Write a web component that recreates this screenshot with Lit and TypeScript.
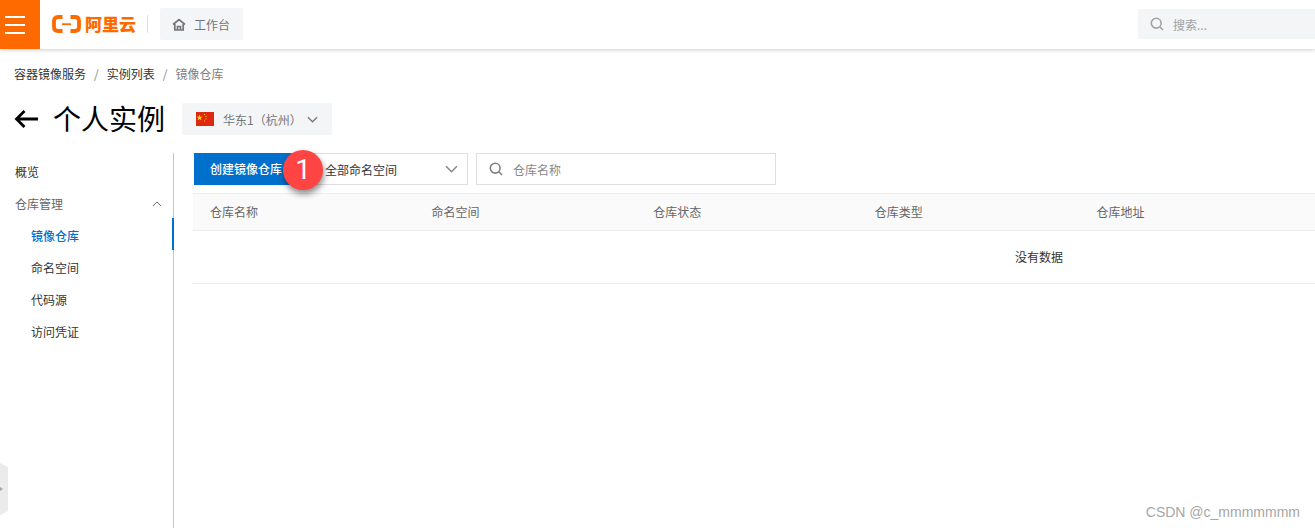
import { LitElement, html, css, svg } from "lit";
import { customElement } from "lit/decorators.js";

const search = (c: string) => svg`<svg width="14" height="14" viewBox="0 0 14 14" fill="none" stroke=${c} stroke-width="1.6"><circle cx="6.2" cy="6.2" r="4.9"/><path d="M9.8 9.8 13 13"/></svg>`;
const chevron = (c: string, w = 12, h = 7, sw = 1.2) => svg`<svg width=${w} height=${h} viewBox="0 0 12 7" fill="none" stroke=${c} stroke-width=${sw}><path d="M1 1l5 5 5-5"/></svg>`;

@customElement("app-root")
export class AppRoot extends LitElement {
  static styles = css`
    :host { display: block; position: relative; width: 1315px; height: 528px; overflow: hidden; background: #fff;
      font-family: "Noto Sans CJK SC", "Liberation Sans", sans-serif; font-size: 12px; color: #333; }
    .top { height: 49px; box-sizing: border-box; padding-bottom: 1px; display: flex; align-items: center; background: #fff; box-shadow: 0 1px 4px rgba(0,0,0,.2); position: relative; }
    .menu { width: 40px; height: 49px; margin-bottom: -1px; background: #ff6a00; display: flex; flex-direction: column; justify-content: center; gap: 6px; padding-left: 5px; box-sizing: border-box; flex: none; }
    .menu i { display: block; width: 20px; height: 2px; background: #fff; }
    .logo { display: flex; align-items: center; margin-left: 12px; width: 95px; flex: none; }
    .logo span { margin-left: 4px; font-size: 17px; line-height: 18px; font-weight: 900; color: #ff6a00; white-space: nowrap; }
    .div { width: 1px; height: 18px; background: #ddd; margin-left: 0; flex: none; }
    .bench { margin-left: 12px; width: 83px; height: 32px; background: #f4f5f7; border-radius: 2px; display: flex; align-items: center; padding-left: 12px; box-sizing: border-box; color: #73777a; gap: 8px; flex: none; }
    .find { margin-left: auto; width: 177px; height: 30px; background: #f4f5f7; display: flex; align-items: center; padding-left: 12px; box-sizing: border-box; gap: 9px; color: #a0a2a3; }
    .crumb { display: flex; height: 18px; align-items: center; margin: 15px 0 0 14px; color: #333; white-space: pre; }
    .crumb em { font-style: normal; color: #888; margin: 0 8px; }
    .crumb b { font-weight: 400; color: #808080; }
    .head { display: flex; align-items: center; height: 32px; margin: 21px 0 0 14px; }
    .title { font-size: 28px; line-height: 30px; height: 32px; color: #000; margin-left: 15px; white-space: nowrap; }
    .region { margin-left: 17px; width: 150px; height: 32px; background: #f4f5f7; border-radius: 2px; display: flex; align-items: center; padding-left: 14px; box-sizing: border-box; color: #73777a; }
    .region .t { margin-left: 9px; white-space: nowrap; width: 84px; }
    .body { display: flex; margin-top: 18px; }
    .side { width: 174px; height: 375px; padding-top: 3px; box-sizing: border-box; border-right: 1px solid #c4c6cf; position: relative; flex: none; }
    .it { height: 32px; line-height: 32px; padding-left: 15px; color: #333; display: flex; align-items: center; }
    .it.group { color: #666; justify-content: space-between; padding-right: 11px; }
    .it.sub { padding-left: 31px; }
    .it.on { color: #0070cc; font-weight: 500; position: relative; }
    .it.on::after { content: ""; position: absolute; right: -1px; top: -2px; width: 2px; height: 32px; background: #0070cc; }
    .main { margin-left: 19px; width: 1694px; flex: none; position: relative; }
    .tools { display: flex; height: 32px; margin-left: 1px; }
    .btn { width: 106px; height: 32px; background: #0070cc; color: #fff; line-height: 32px; padding-left: 16px; box-sizing: border-box; font-weight: 500; }
    .sel { width: 168px; height: 32px; box-sizing: border-box; border: 1px solid #dcdee3; border-left: 0; display: flex; align-items: center; justify-content: space-between; padding: 0 9px 0 25px; color: #333; }
    .inp { margin-left: 8px; width: 300px; height: 32px; box-sizing: border-box; border: 1px solid #dcdee3; display: flex; align-items: center; padding-left: 12px; gap: 10px; color: #888; }
    .thead { margin-top: 8px; height: 38px; box-sizing: border-box; padding-bottom: 2px; background: #fafafa; border-top: 1px solid #ebecf0; border-bottom: 1px solid #ebecf0; display: grid; grid-template-columns: repeat(5, 221.6px); align-items: center; color: #666; }
    .thead div { padding-left: 17px; }
    .empty { height: 53px; box-sizing: border-box; padding: 0 2px 2px 0; border-bottom: 1px solid #ebecf0; display: flex; align-items: center; justify-content: center; color: #333; }
    .badge { position: absolute; left: 283px; top: 150px; width: 40px; height: 40px; border-radius: 50%; background: #ff4444; color: #fff; font: 400 28px/40px Roboto, sans-serif; text-align: center; box-shadow: 1px 4px 6px rgba(0,0,0,.45); }
    .handle { position: absolute; left: 0; top: 463px; }
    .mark { position: absolute; right: 15px; top: 504px; font: 14px/16px "Liberation Sans", sans-serif; color: #a6a6a6; }
  `;

  render() {
    return html`
      <div class="top">
        <div class="menu"><i></i><i></i><i></i></div>
        <div class="logo">
          <svg width="29" height="18" viewBox="0 0 29 18" fill="none" stroke="#ff6a00" stroke-width="3.800">
            <path d="M10.500 2 6 2Q2 2 2 6v6Q2 16 6 16H10.500"/>
            <path d="M18.500 2 23 2Q27 2 27 6v6Q27 16 23 16H18.500"/>
            <path d="M10 9.200H19" stroke-width="1.800"/>
          </svg>
          <span>阿里云</span>
        </div>
        <div class="div"></div>
        <div class="bench">
          <svg width="14" height="13" viewBox="0 0 14 13" fill="none" stroke="#73777a" stroke-width="1.700"><path d="M1 6.500 7 1.500 13 6.500M2.800 6v6h8.400V6M5.500 12V8.500h3V12"/></svg>
          <span>工作台</span>
        </div>
        <div class="find">${search("#a0a2a3")}<span>搜索...</span></div>
      </div>
      <div class="crumb"><span>容器镜像服务</span><em>/</em><span>实例列表</span><em>/</em><b>镜像仓库</b></div>
      <div class="head">
        <svg width="24" height="20" viewBox="0 0 24 20" fill="none" stroke="#000" stroke-width="2.800"><path d="M24 10H2.500M10.500 2 2.500 10l8 8"/></svg>
        <div class="title">个人实例</div>
        <div class="region">
          <svg width="18" height="14" viewBox="0 0 18 14"><rect width="18" height="14" fill="#de2910"/><path d="M3.500 2.500l.8 2.200h2.200l-1.800 1.400.7 2.200-1.900-1.300-1.900 1.300.7-2.200L.5 4.700h2.200z" fill="#ffde00"/><circle cx="8.500" cy="2.500" r=".6" fill="#ffde00"/><circle cx="10" cy="4.500" r=".6" fill="#ffde00"/><circle cx="10" cy="7" r=".6" fill="#ffde00"/><circle cx="8.500" cy="9" r=".6" fill="#ffde00"/></svg>
          <span class="t">华东1（杭州）</span>
          ${chevron("#73777a", 11, 7, 1.400)}
        </div>
      </div>
      <div class="body">
        <div class="side">
          <div class="it">概览</div>
          <div class="it group"><span>仓库管理</span><svg width="10" height="6" viewBox="0 0 12 7" fill="none" stroke="#666" stroke-width="1.200"><path d="M1 6l5-5 5 5"/></svg></div>
          <div class="it sub on">镜像仓库</div>
          <div class="it sub">命名空间</div>
          <div class="it sub">代码源</div>
          <div class="it sub">访问凭证</div>
        </div>
        <div class="main">
          <div class="tools">
            <div class="btn">创建镜像仓库</div>
            <div class="sel"><span>全部命名空间</span>${chevron("#888", 13, 8, 1.400)}</div>
            <div class="inp">${search("#808080")}<span>仓库名称</span></div>
          </div>
          <div class="thead"><div>仓库名称</div><div>命名空间</div><div>仓库状态</div><div>仓库类型</div><div>仓库地址</div></div>
          <div class="empty">没有数据</div>
        </div>
      </div>
      <div class="badge">1</div>
      <svg class="handle" width="9" height="52" viewBox="0 0 9 52"><path d="M0 0l8 4v44l-8 4z" fill="#ebebeb"/><path d="M0 24l3 2-3 2z" fill="#a8a8a8"/></svg>
      <div class="mark">CSDN @c_mmmmmmm</div>
    `;
  }
}
